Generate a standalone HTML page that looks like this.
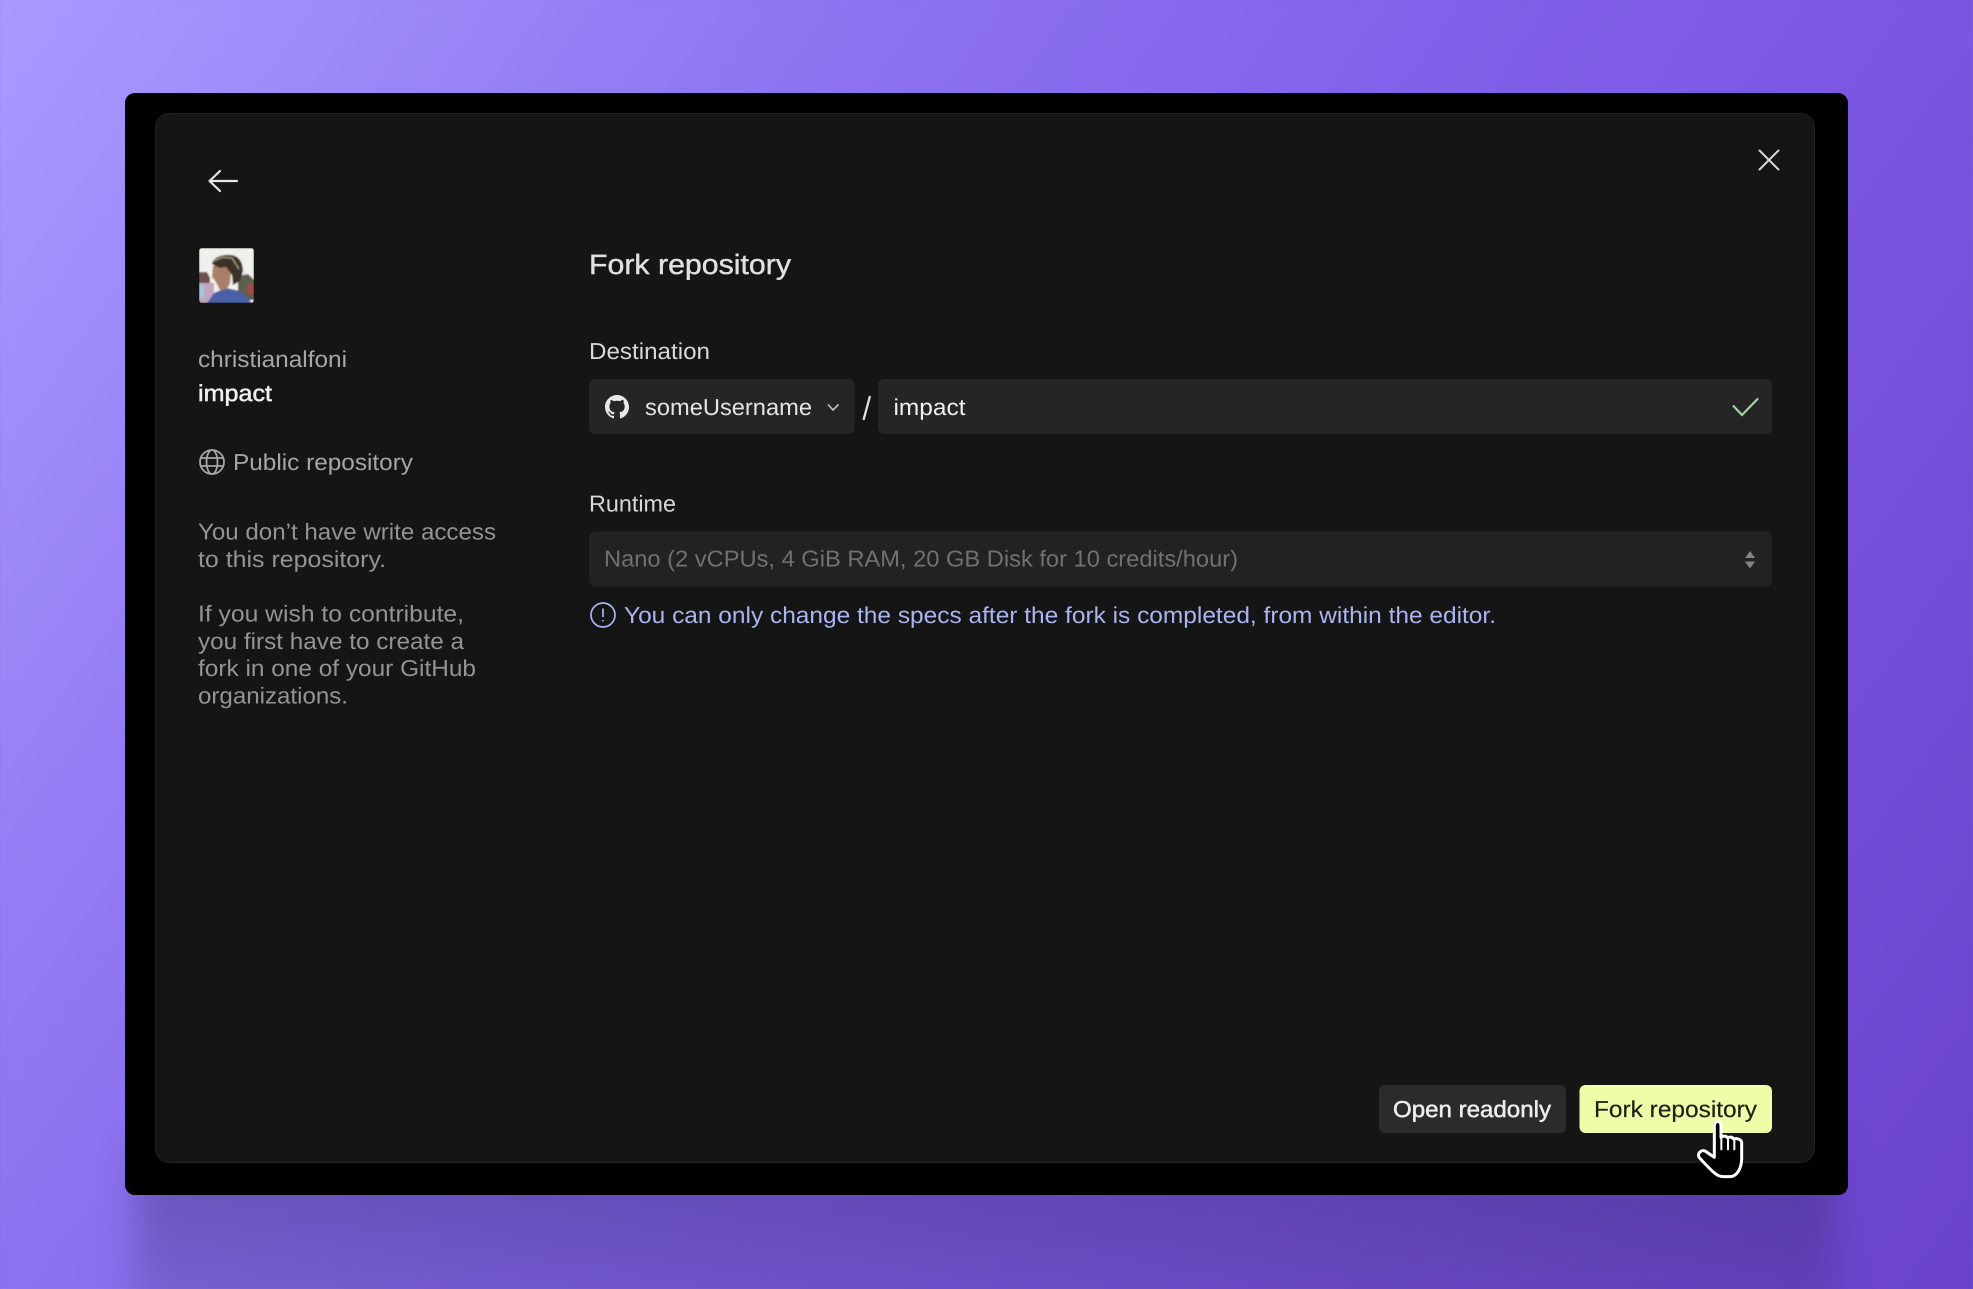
<!DOCTYPE html>
<html><head><meta charset="utf-8"><style>
html,body{margin:0;padding:0;width:1973px;height:1289px;overflow:hidden}
body{background:linear-gradient(125deg,#aa9aff 0%,#8c72f0 31%,#8262ea 50%,#7a55e0 69%,#6a42cc 100%);position:relative}
#shadow{position:absolute;left:136px;top:1150px;width:1700px;height:190px;background:linear-gradient(180deg,rgba(45,40,90,.36) 0%,rgba(45,40,90,.32) 30%,rgba(45,40,90,.12) 100%);filter:blur(18px)}
svg{position:absolute;left:0;top:0}
text{font-family:"Liberation Sans",sans-serif;font-size:23px;text-rendering:geometricPrecision}
</style></head><body><div id="shadow"></div>
<svg width="1973" height="1289" viewBox="0 0 1973 1289" xmlns="http://www.w3.org/2000/svg">
<defs><filter id="b" x="-10%" y="-10%" width="120%" height="120%"><feGaussianBlur stdDeviation="0.8"/></filter>
<clipPath id="av"><rect x="199" y="248" width="55" height="55" rx="3"/></clipPath></defs>
<rect x="125" y="93" width="1723" height="1102" rx="10" fill="#000"/>
<rect x="155.5" y="113.5" width="1659" height="1049" rx="14" fill="#151515" stroke="#202020"/>

<path d="M237 181H210M220 171L209.500 181L220 191" fill="none" stroke="#e6e6e6" stroke-width="2.200" stroke-linecap="round" stroke-linejoin="round"/>
<path d="M1759.500 150.500L1778.500 169.500M1778.500 150.500L1759.500 169.500" fill="none" stroke="#d8d8d8" stroke-width="2" stroke-linecap="round"/>

<g clip-path="url(#av)"><g filter="url(#b)">
<rect x="199" y="248" width="55" height="55" fill="#f0f0ec"/>
<path d="M199 272h8l3 6v25h-11z" fill="#6e4f4c"/>
<path d="M199 283h15v20h-15z" fill="#c2a4bc"/>
<path d="M199 284h5v14h-5z" fill="#a8c4dc"/>
<path d="M238 276l10-2 6 6v20h-16z" fill="#5e5e50"/>
<path d="M248 284h6v10h-6z" fill="#a84a44"/>
<path d="M207 303l7-10 12-5 14 3 12 12z" fill="#4a5fa6"/>
<path d="M213 266l10-3 8 8-1 12-3 6-7 1-4-8-4-5z" fill="#a87f68"/>
<path d="M212 264c1-7 11-10 19-9 9 1 12 9 12 16l-3 10-7 4-1-10-6-8-6 1z" fill="#3a3129"/>
<path d="M213 261l10-4 9 1 7 11" fill="none" stroke="#9f9379" stroke-width="1.500"/>
</g></g>

<text x="198" y="367" textLength="149" lengthAdjust="spacingAndGlyphs" fill="#a6a6a6">christianalfoni</text>
<text x="198" y="401" textLength="74" lengthAdjust="spacingAndGlyphs" fill="#f0f0f0" stroke="#f0f0f0" stroke-width=".5">impact</text>

<g fill="none" stroke="#a6a6a6" stroke-width="1.800"><circle cx="212" cy="462" r="12"/><ellipse cx="212" cy="462" rx="5.500" ry="12"/><path d="M200.500 458h23M200.500 466h23"/></g>
<text x="233" y="470" textLength="180" lengthAdjust="spacingAndGlyphs" fill="#a6a6a6">Public repository</text>

<g fill="#949494">
<text x="198" y="539.500" textLength="298" lengthAdjust="spacingAndGlyphs">You don’t have write access</text>
<text x="198" y="567" textLength="188" lengthAdjust="spacingAndGlyphs">to this repository.</text>
<text x="198" y="621.500" textLength="266" lengthAdjust="spacingAndGlyphs">If you wish to contribute,</text>
<text x="198" y="649" textLength="266" lengthAdjust="spacingAndGlyphs">you first have to create a</text>
<text x="198" y="676" textLength="278" lengthAdjust="spacingAndGlyphs">fork in one of your GitHub</text>
<text x="198" y="703.500" textLength="150" lengthAdjust="spacingAndGlyphs">organizations.</text>
</g>

<text x="589" y="274" textLength="202" lengthAdjust="spacingAndGlyphs" fill="#e0e0e0" stroke="#e0e0e0" stroke-width=".4" style="font-size:28px">Fork repository</text>
<text x="589" y="359" textLength="121" lengthAdjust="spacingAndGlyphs" fill="#d8d8d8">Destination</text>

<rect x="589" y="379" width="265.500" height="55" rx="6" fill="#252525"/>
<path fill="#e8e8e8" transform="translate(605 395) scale(1.500)" d="M8 0C3.580 0 0 3.580 0 8c0 3.540 2.290 6.530 5.470 7.590.4.070.55-.17.55-.38 0-.19-.01-.82-.01-1.490-2.010.37-2.530-.49-2.690-.94-.09-.23-.48-.94-.82-1.130-.28-.15-.68-.52-.01-.53.630-.01 1.080.58 1.230.82.72 1.210 1.870.87 2.330.66.070-.52.28-.87.51-1.070-1.780-.2-3.640-.89-3.640-3.950 0-.87.31-1.590.82-2.150-.08-.2-.36-1.020.08-2.120 0 0 .67-.21 2.200.82.64-.18 1.320-.27 2-.27s1.360.09 2 .27c1.530-1.040 2.200-.82 2.200-.82.44 1.100.16 1.920.08 2.120.51.56.82 1.270.82 2.150 0 3.070-1.870 3.750-3.650 3.950.29.25.54.73.54 1.480 0 1.070-.01 1.930-.01 2.200 0 .21.15.46.55.38A8.010 8.010 0 0 0 16 8c0-4.420-3.580-8-8-8z"/>
<text x="645" y="415" textLength="167" lengthAdjust="spacingAndGlyphs" fill="#e4e4e4">someUsername</text>
<path d="M828 404.500L833 410L838.500 404.500" fill="none" stroke="#c4c4c4" stroke-width="1.600"/>
<path d="M870 396L863.500 420" fill="none" stroke="#e0e0e0" stroke-width="2.300"/>

<rect x="878" y="379" width="894" height="55" rx="6" fill="#252525"/>
<text x="893.500" y="415" textLength="72" lengthAdjust="spacingAndGlyphs" fill="#f0f0f0">impact</text>
<path d="M1733 405.500L1742 415L1758 398.500" fill="none" stroke="#a6dca2" stroke-width="2"/>

<text x="589" y="511.500" textLength="87" lengthAdjust="spacingAndGlyphs" fill="#d8d8d8">Runtime</text>
<rect x="589" y="531.500" width="1183" height="55" rx="6" fill="#222"/>
<text x="604" y="566.500" textLength="634" lengthAdjust="spacingAndGlyphs" fill="#717171">Nano (2 vCPUs, 4 GiB RAM, 20 GB Disk for 10 credits/hour)</text>
<path d="M1750 551l5 7h-10zM1750 568.500l-5-7h10z" fill="#858585"/>

<circle cx="603" cy="615" r="12" fill="none" stroke="#a9b4f0" stroke-width="1.700"/>
<path d="M603 608.500v8.500M603 620v1.500" stroke="#a9b4f0" stroke-width="1.700" fill="none"/>
<text x="624" y="623" textLength="872" lengthAdjust="spacingAndGlyphs" fill="#a9b4f0">You can only change the specs after the fork is completed, from within the editor.</text>

<rect x="1379" y="1085" width="187" height="48" rx="6" fill="#2b2b2b"/>
<text x="1393" y="1117" textLength="158" lengthAdjust="spacingAndGlyphs" fill="#ededed" stroke="#ededed" stroke-width=".5">Open readonly</text>
<rect x="1579.500" y="1085" width="192.500" height="48" rx="6" fill="#edfda8"/>
<text x="1594" y="1117" textLength="163" lengthAdjust="spacingAndGlyphs" fill="#1e2114" stroke="#1e2114" stroke-width=".2">Fork repository</text>

<g transform="translate(1680 1090) scale(.33333)">
<path d="M103 108c0-18 20-18 20 0v34c6-5 16-5 20 2 5-4 14-4 18 3 8-3 24 0 24 12v46c0 26-12 55-36 55h-20c-16 0-28-10-70-56-10-11 4-28 18-20l26 18z" fill="#000" stroke="#fff" stroke-width="9" stroke-linejoin="round"/>
<path d="M124 144v34M144 148v30M163 152v26" fill="none" stroke="#fff" stroke-width="6" stroke-linecap="round"/>
</g>
</svg>
</body></html>
